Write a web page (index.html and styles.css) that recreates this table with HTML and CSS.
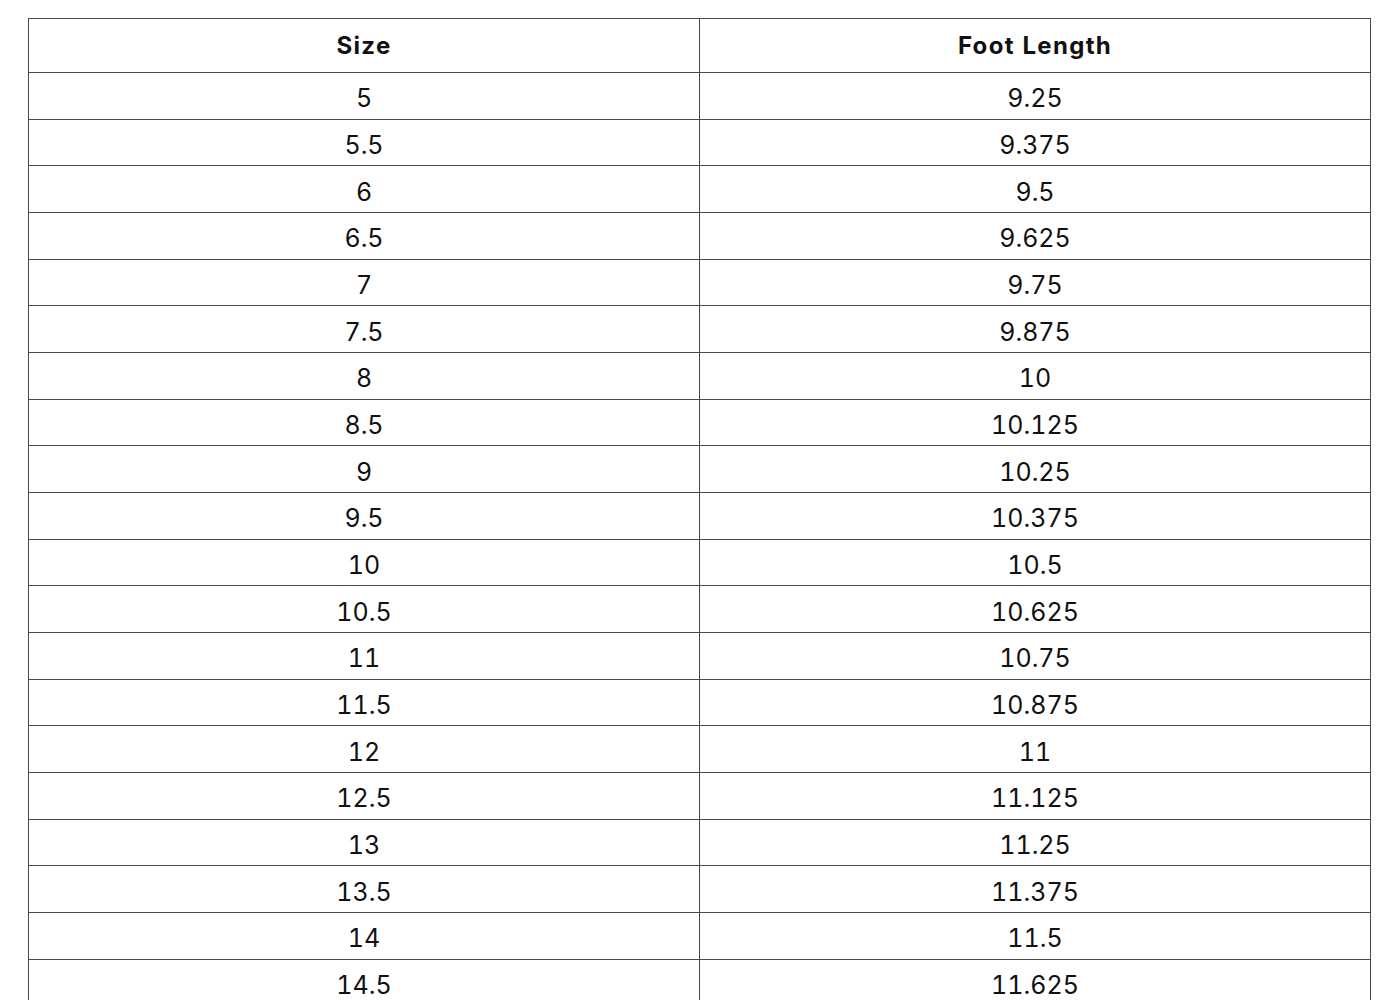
FILE: index.html
```html
<!DOCTYPE html>
<html>
<head>
<meta charset="utf-8">
<link rel="stylesheet" href="styles.css">
</head>
<body>
<div class="chart">
<div class="cell head">Size</div><div class="cell head">Foot Length</div>
<div class="cell">5</div><div class="cell">9.25</div>
<div class="cell">5.5</div><div class="cell">9.375</div>
<div class="cell">6</div><div class="cell">9.5</div>
<div class="cell">6.5</div><div class="cell">9.625</div>
<div class="cell">7</div><div class="cell">9.75</div>
<div class="cell">7.5</div><div class="cell">9.875</div>
<div class="cell">8</div><div class="cell">10</div>
<div class="cell">8.5</div><div class="cell">10.125</div>
<div class="cell">9</div><div class="cell">10.25</div>
<div class="cell">9.5</div><div class="cell">10.375</div>
<div class="cell">10</div><div class="cell">10.5</div>
<div class="cell">10.5</div><div class="cell">10.625</div>
<div class="cell">11</div><div class="cell">10.75</div>
<div class="cell">11.5</div><div class="cell">10.875</div>
<div class="cell">12</div><div class="cell">11</div>
<div class="cell">12.5</div><div class="cell">11.125</div>
<div class="cell">13</div><div class="cell">11.25</div>
<div class="cell">13.5</div><div class="cell">11.375</div>
<div class="cell">14</div><div class="cell">11.5</div>
<div class="cell">14.5</div><div class="cell">11.625</div>
</div>
</body>
</html>
```
FILE: styles.css
```css
html, body {
  margin: 0;
  padding: 0;
  background: #fff;
}
body {
  padding: 18px 0 0 28px;
  font-family: Inter, "Open Sans", sans-serif;
  color: #111;
}
.chart {
  display: grid;
  width: 1343px;
  grid-template-columns: 1fr 1fr;
  grid-template-rows: 54px;
  grid-auto-rows: 46.68px;
  border-top: 1px solid #4a4a4a;
  border-left: 1px solid #4a4a4a;
  box-sizing: border-box;
}
.cell {
  border-right: 1px solid #4a4a4a;
  border-bottom: 1px solid #4a4a4a;
  display: flex;
  align-items: center;
  justify-content: center;
  font-size: 25px;
  font-weight: 400;
  font-variant-numeric: tabular-nums;
  padding-top: 5px;
  box-sizing: border-box;
}
.cell.head {
  font-size: 24px;
  font-weight: 700;
  letter-spacing: 1.3px;
  padding-top: 0;
}
```
